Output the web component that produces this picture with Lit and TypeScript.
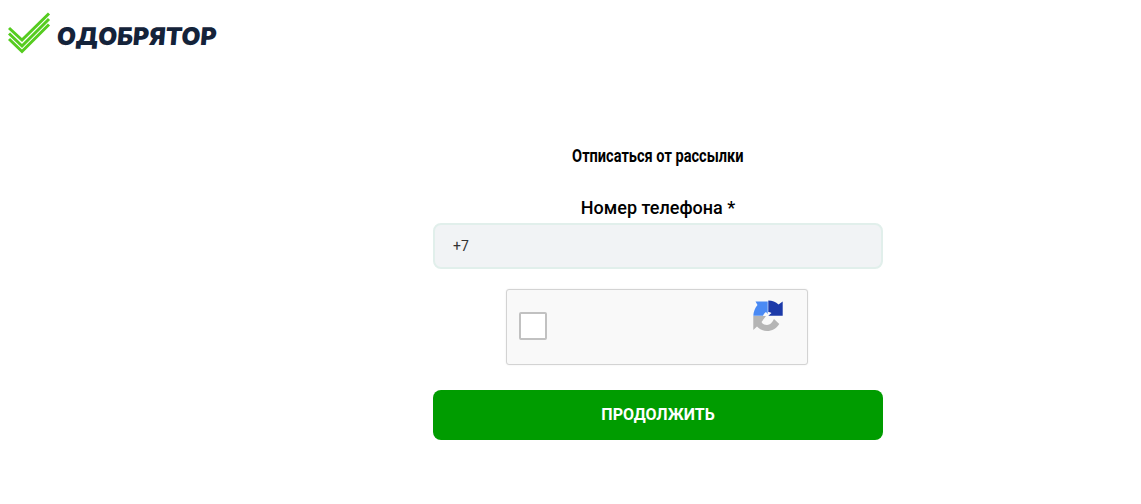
import {css, html, LitElement} from 'lit';
import {customElement} from 'lit/decorators.js';

@customElement('app-root')
export class AppRoot extends LitElement {
    static styles = css`
        :host {
            display: block;
            height: 504px;
            background: #fff;
            font-family: Roboto, "Noto Sans", sans-serif;
            color: #000;
        }

        .logo {
            display: flex;
            align-items: flex-start;
            padding: 12px 0 0 8px;
            height: 42px;
        }

        .logo svg {
            width: 44px;
            height: 42px;
            flex: none;
        }

        .logo-text {
            margin: 9px 0 0 5px;
            font: 900 24.5px/30px Inter, sans-serif;
            color: #14233a;
            white-space: nowrap;
            transform: skewX(-5deg);
        }

        .form {
            display: flex;
            flex-direction: column;
            align-items: center;
            width: 450px;
            margin: 0 0 0 433px;
            padding-top: 92px;
        }

        .title {
            font-size: 18px;
            line-height: 20px;
            font-weight: 700;
            transform: scaleX(0.81);
            white-space: nowrap;
        }

        .label {
            margin-top: 31px;
            font-size: 18px;
            line-height: 22px;
            font-weight: 500;
        }

        .phone {
            box-sizing: border-box;
            width: 100%;
            height: 46px;
            margin-top: 4px;
            padding: 0 18px;
            display: flex;
            align-items: center;
            background: #f1f3f5;
            border: 2px solid #e1efeb;
            border-radius: 8px;
            font-size: 14px;
            color: #333;
        }

        .captcha {
            box-sizing: border-box;
            width: 302px;
            height: 76px;
            margin: 20px 2px 0 0;
            padding: 22px 0 0 12px;
            display: flex;
            justify-content: space-between;
            align-items: flex-start;
            background: #f9f9f9;
            border: 1px solid #d3d3d3;
            border-radius: 3px;
            box-shadow: 0 0 2px rgba(0, 0, 0, 0.08);
        }

        .check {
            box-sizing: border-box;
            width: 28px;
            height: 28px;
            background: #fff;
            border: 2px solid #c1c1c1;
            border-radius: 2px;
        }

        .captcha svg {
            width: 32px;
            height: 32px;
            margin: -12px 23px 0 0;
        }

        .submit {
            width: 100%;
            height: 50px;
            margin-top: 25px;
            padding: 0 0 2px;
            border: none;
            border-radius: 8px;
            background: #009c00;
            color: #fff;
            font-family: inherit;
            font-size: 16px;
            font-weight: 700;
        }
    `;

    render() {
        return html`
            <div class="logo">
                <svg viewBox="0 0 44 42" fill="none" stroke="#55cc1f" stroke-width="3">
                    <path d="M1 16 L14 28 L41 1.5"/>
                    <path d="M1 21.500 L14 34 L41 7"/>
                    <path d="M1 27 L14 39.500 L41 12.500"/>
                </svg>
                <div class="logo-text">ОДОБРЯТОР</div>
            </div>
            <div class="form">
                <div class="title">Отписаться от рассылки</div>
                <div class="label">Номер телефона *</div>
                <div class="phone">+7</div>
                <div class="captcha">
                    <div class="check"></div>
                    <svg viewBox="0 0 32 32">
                        <path fill="#b5b5b5" d="M1.300 16 V30 L5 26.500 C8 29.500 11.500 31 15 31 C20 31 24.500 28.500 27.300 24 L22 19 C20.500 22 18 25 15 25 C12.500 25 10.500 24 9.500 22 L14 16 Z"/>
                        <path fill="#4a8af4" d="M1.300 15.700 C1.500 11.500 3 8 5.500 5 L3.500 1.500 H15.700 V14 L14 12 C12.500 13 11.500 14.200 11 15.700 Z"/>
                        <path fill="#1c3aa9" d="M16.300 0.500 C20 0.500 24 2 26.500 4.500 L30.700 1.500 V15.700 H16.300 L19.500 13 C18.500 12.300 17.500 12 16.300 12 Z"/>
                    </svg>
                </div>
                <button class="submit">ПРОДОЛЖИТЬ</button>
            </div>
        `;
    }
}
